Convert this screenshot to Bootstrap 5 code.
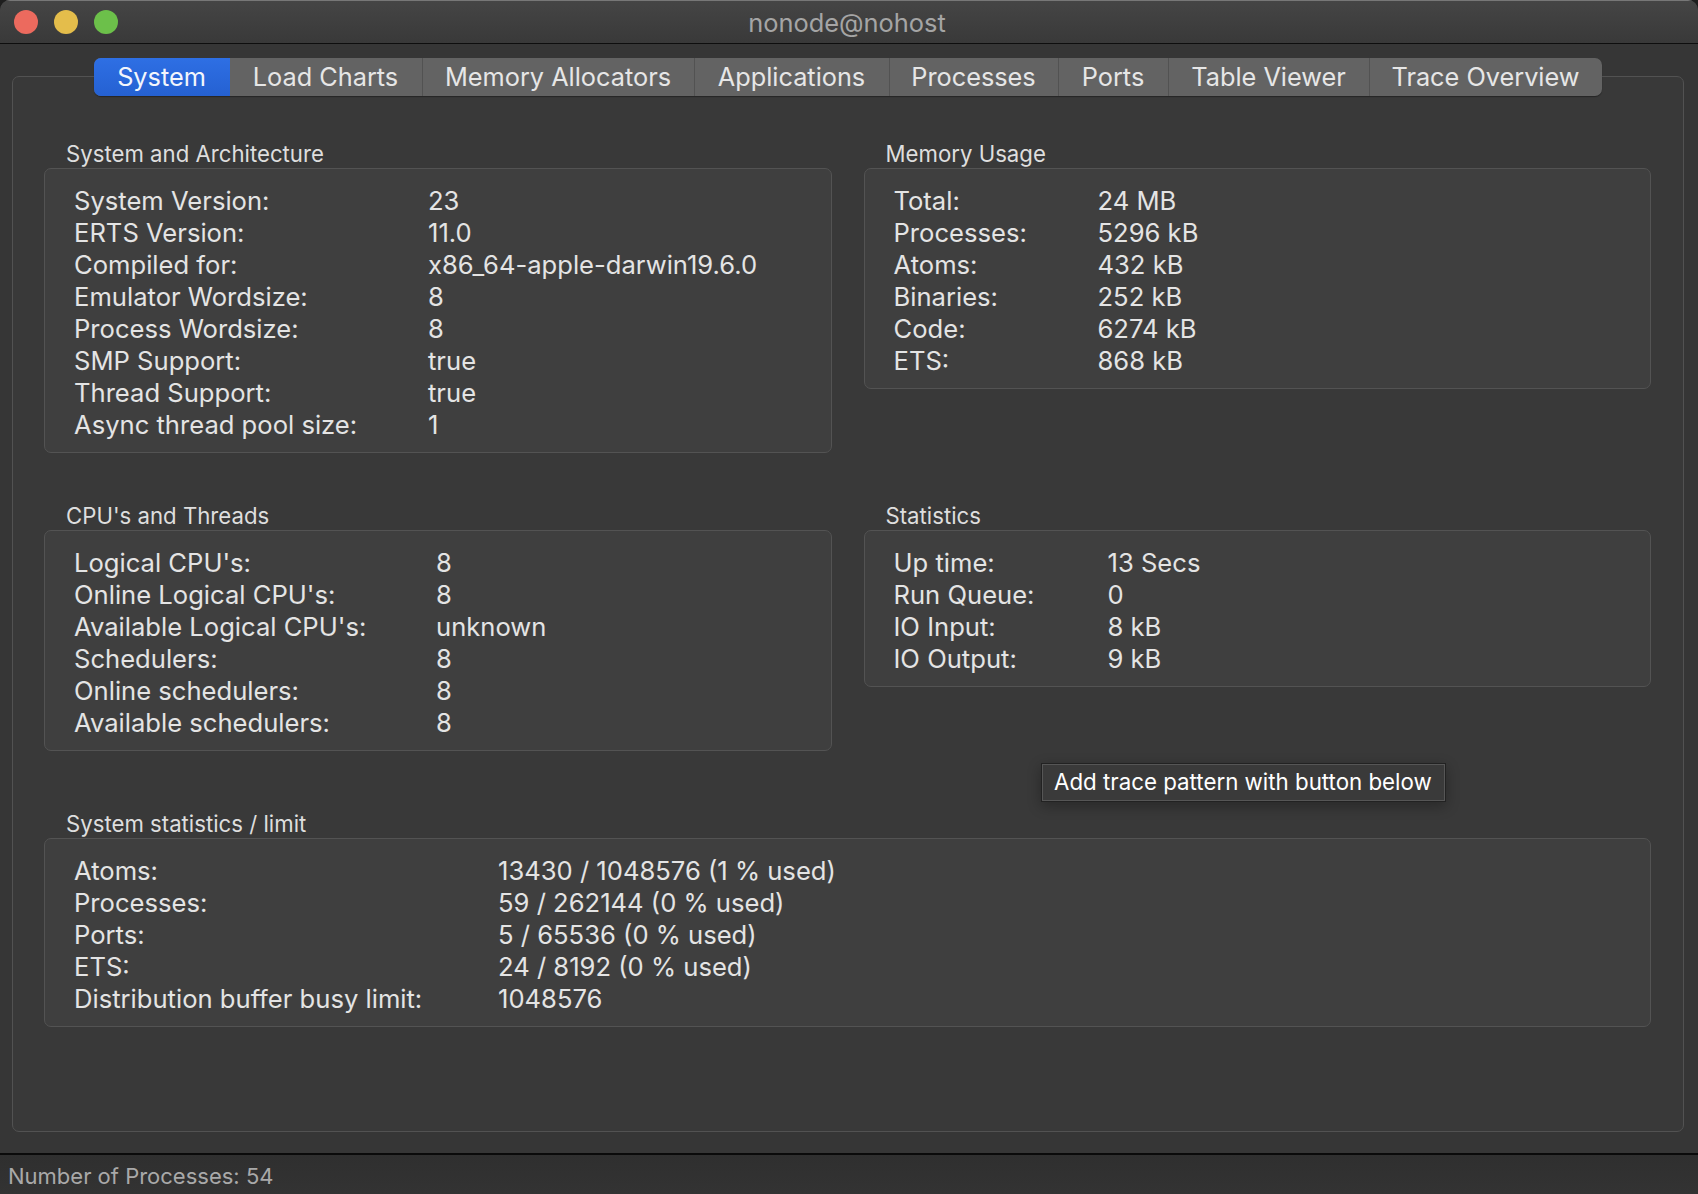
<!doctype html>
<html lang="en">
<head>
<meta charset="utf-8">
<title>nonode@nohost</title>
<link href="https://cdn.jsdelivr.net/npm/bootstrap@5.3.0/dist/css/bootstrap.min.css" rel="stylesheet">
<style>
html,body{height:100%;margin:0;background:#1e1e1e;overflow:hidden}
body{font-family:Inter,"Liberation Sans",sans-serif;color:#e3e3e3}
.app-window{height:1194px;background:#363636;border-radius:10px 10px 0 0;overflow:hidden}
.title-bar{height:44px;flex:none;background:linear-gradient(#454545,#393939);border-top:1px solid #777;border-bottom:1px solid #0e0e0e}
.title-text{font-size:25.4px;line-height:44px;color:#a5a5a5;padding-right:4px}
.traffic{width:24px;height:24px;border-radius:50%}
.t-red{background:#ec6a5e}.t-yellow{background:#e4bd4b}.t-green{background:#6cc04a}
.traffic-set{left:14px;top:9px;gap:16px}
.body-area{flex:1 1 auto;padding:32px 14px 21px 12px;min-height:0;background:#363636}
.pane-box{height:100%;border:1px solid #525252;border-radius:7px;background:#393939;padding-left:31px;padding-right:32px}
.tab-strip{margin-top:-19px;height:38px;flex:none;background:#636363;border-radius:7px;box-shadow:0 1px 1px rgba(0,0,0,.35);overflow:hidden;font-size:25.3px;color:#e6e6e6}
.tab-item{line-height:38px;text-align:center;border-right:1px solid #525252;flex:none}
.tab-item:last-child{border-right:0}
.tab-item.on{background:linear-gradient(#2e6fe4,#2561d2);color:#f3f6fc;border-right:0}
.w1{width:136px}.w2{width:193px}.w3{width:272px}.w4{width:195px}.w5{width:169px}.w6{width:110px}.w7{width:201px}.w8{width:232px}
.top-gap{padding-top:45px}
.grid-row{--bs-gutter-x:32px;--bs-gutter-y:0}
.group-head{font-size:22.2px;line-height:28px;padding-left:22px;margin-top:-1px;color:#dedede}
.group-body{background:#3f3f3f;border:1px solid #535353;border-radius:7px;padding:16px 29px 11px;font-size:25.6px;line-height:32px;color:#e4e4e4}
.stack-gap{margin-top:50px}
.stats-block{margin-top:114px}
.limit-block{margin-top:60px}
.lab-a{width:354px}.lab-b{width:362px}.lab-c{width:204px}.lab-d{width:214px}.lab-e{width:424px}
.hint{left:1041px;top:763px;width:405px;height:39px;background:#3a3a3a;border:1px solid #222;outline:1px solid #565656;outline-offset:-2px;box-shadow:0 4px 14px rgba(0,0,0,.3);font-size:22.3px;line-height:36px;padding-left:12px;color:#fff;white-space:nowrap}
.status-bar{height:41px;flex:none;background:linear-gradient(#2f2f2f,#333);border-top:2px solid #0a0a0a;font-size:22px;line-height:42px;padding-left:8px;color:#a9a9a9}
</style>
</head>
<body>
<div class="app-window d-flex flex-column position-relative">
  <header class="title-bar position-relative text-center">
    <div class="traffic-set d-flex position-absolute">
      <span class="traffic t-red"></span><span class="traffic t-yellow"></span><span class="traffic t-green"></span>
    </div>
    <div class="title-text">nonode@nohost</div>
  </header>
  <main class="body-area">
    <div class="pane-box">
      <div class="d-flex justify-content-center">
        <nav class="tab-strip d-flex">
          <div class="tab-item on w1">System</div>
          <div class="tab-item w2">Load Charts</div>
          <div class="tab-item w3">Memory Allocators</div>
          <div class="tab-item w4">Applications</div>
          <div class="tab-item w5">Processes</div>
          <div class="tab-item w6">Ports</div>
          <div class="tab-item w7">Table Viewer</div>
          <div class="tab-item w8">Trace Overview</div>
        </nav>
      </div>
      <div class="top-gap">
        <div class="row grid-row">
          <div class="col-6">
            <section>
              <div class="group-head">System and Architecture</div>
              <div class="group-body">
                <div class="d-flex"><span class="lab-a">System Version:</span><span>23</span></div>
                <div class="d-flex"><span class="lab-a">ERTS Version:</span><span>11.0</span></div>
                <div class="d-flex"><span class="lab-a">Compiled for:</span><span>x86_64-apple-darwin19.6.0</span></div>
                <div class="d-flex"><span class="lab-a">Emulator Wordsize:</span><span>8</span></div>
                <div class="d-flex"><span class="lab-a">Process Wordsize:</span><span>8</span></div>
                <div class="d-flex"><span class="lab-a">SMP Support:</span><span>true</span></div>
                <div class="d-flex"><span class="lab-a">Thread Support:</span><span>true</span></div>
                <div class="d-flex"><span class="lab-a">Async thread pool size:</span><span>1</span></div>
              </div>
            </section>
            <section class="stack-gap">
              <div class="group-head">CPU's and Threads</div>
              <div class="group-body">
                <div class="d-flex"><span class="lab-b">Logical CPU's:</span><span>8</span></div>
                <div class="d-flex"><span class="lab-b">Online Logical CPU's:</span><span>8</span></div>
                <div class="d-flex"><span class="lab-b">Available Logical CPU's:</span><span>unknown</span></div>
                <div class="d-flex"><span class="lab-b">Schedulers:</span><span>8</span></div>
                <div class="d-flex"><span class="lab-b">Online schedulers:</span><span>8</span></div>
                <div class="d-flex"><span class="lab-b">Available schedulers:</span><span>8</span></div>
              </div>
            </section>
          </div>
          <div class="col-6">
            <section>
              <div class="group-head">Memory Usage</div>
              <div class="group-body">
                <div class="d-flex"><span class="lab-c">Total:</span><span>24 MB</span></div>
                <div class="d-flex"><span class="lab-c">Processes:</span><span>5296 kB</span></div>
                <div class="d-flex"><span class="lab-c">Atoms:</span><span>432 kB</span></div>
                <div class="d-flex"><span class="lab-c">Binaries:</span><span>252 kB</span></div>
                <div class="d-flex"><span class="lab-c">Code:</span><span>6274 kB</span></div>
                <div class="d-flex"><span class="lab-c">ETS:</span><span>868 kB</span></div>
              </div>
            </section>
            <section class="stats-block">
              <div class="group-head">Statistics</div>
              <div class="group-body">
                <div class="d-flex"><span class="lab-d">Up time:</span><span>13 Secs</span></div>
                <div class="d-flex"><span class="lab-d">Run Queue:</span><span>0</span></div>
                <div class="d-flex"><span class="lab-d">IO Input:</span><span>8 kB</span></div>
                <div class="d-flex"><span class="lab-d">IO Output:</span><span>9 kB</span></div>
              </div>
            </section>
          </div>
        </div>
        <section class="limit-block">
          <div class="group-head">System statistics / limit</div>
          <div class="group-body">
            <div class="d-flex"><span class="lab-e">Atoms:</span><span>13430 / 1048576 (1 % used)</span></div>
            <div class="d-flex"><span class="lab-e">Processes:</span><span>59 / 262144 (0 % used)</span></div>
            <div class="d-flex"><span class="lab-e">Ports:</span><span>5 / 65536 (0 % used)</span></div>
            <div class="d-flex"><span class="lab-e">ETS:</span><span>24 / 8192 (0 % used)</span></div>
            <div class="d-flex"><span class="lab-e">Distribution buffer busy limit:</span><span>1048576</span></div>
          </div>
        </section>
      </div>
    </div>
  </main>
  <footer class="status-bar">Number of Processes: 54</footer>
  <div class="hint position-absolute">Add trace pattern with button below</div>
</div>
<script src="https://cdn.jsdelivr.net/npm/bootstrap@5.3.0/dist/js/bootstrap.bundle.min.js"></script>
</body>
</html>
